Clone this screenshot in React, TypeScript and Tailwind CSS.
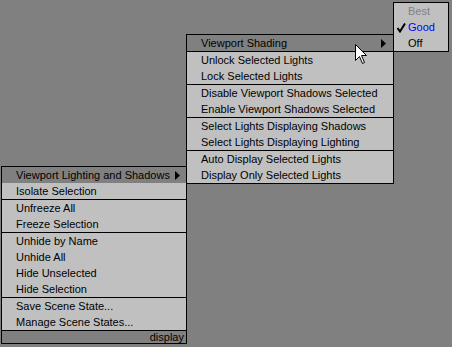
import React from 'react';

// --- Menu data ---
type Item = { label: string; sub?: boolean; active?: boolean };

const upperGroups: Item[][] = [
  [{ label: 'Viewport Shading', sub: true, active: true }],
  [{ label: 'Unlock Selected Lights' }, { label: 'Lock Selected Lights' }],
  [{ label: 'Disable Viewport Shadows Selected' }, { label: 'Enable Viewport Shadows Selected' }],
  [{ label: 'Select Lights Displaying Shadows' }, { label: 'Select Lights Displaying Lighting' }],
  [{ label: 'Auto Display Selected Lights' }, { label: 'Display Only Selected Lights' }],
];

const leftGroups: Item[][] = [
  [{ label: 'Viewport Lighting and Shadows', sub: true, active: true }, { label: 'Isolate Selection' }],
  [{ label: 'Unfreeze All' }, { label: 'Freeze Selection' }],
  [{ label: 'Unhide by Name' }, { label: 'Unhide All' }, { label: 'Hide Unselected' }, { label: 'Hide Selection' }],
  [{ label: 'Save Scene State...' }, { label: 'Manage Scene States...' }],
];

const SubArrow: React.FC<{ className?: string }> = ({ className }) => (
  <svg width="5" height="9" viewBox="0 0 5 9" className={className}>
    <path d="M0 0 L5 4.5 L0 9 Z" fill="#000" />
  </svg>
);

const MenuRow: React.FC<{ item: Item; arrowRight: string }> = ({ item, arrowRight }) => (
  <div
    className={`relative h-4 pl-[14px] leading-4 whitespace-nowrap ${item.active ? 'bg-[#808080]' : ''}`}
  >
    {item.label}
    {item.sub && <SubArrow className={`absolute top-[4px] ${arrowRight}`} />}
  </div>
);

const Menu: React.FC<{ groups: Item[][]; arrowRight: string; footer?: boolean }> = ({ groups, arrowRight, footer }) => (
  <div className="flex flex-col border border-black bg-[#c0c0c0] text-black">
    {groups.map((g, gi) => (
      <div key={gi} className={gi > 0 ? 'border-t border-black' : ''}>
        {g.map((it) => (
          <MenuRow key={it.label} item={it} arrowRight={arrowRight} />
        ))}
      </div>
    ))}
    {footer && (
      <div className="h-[13px] border-t border-black bg-[#808080] pr-[2px] text-right leading-[12px]">display</div>
    )}
  </div>
);

const Cursor: React.FC = () => (
  <svg width="13" height="22" viewBox="0 0 13 22">
    <path
      d="M0.5 0.5 L0.5 16.5 L4.5 12.5 L7.5 19.5 L9.5 18.5 L6.5 11.5 L11.5 11.5 Z"
      fill="#fff"
      stroke="#000"
      strokeWidth="1"
    />
  </svg>
);

export default function App() {
  return (
    <div
      className="relative h-[347px] w-[452px] overflow-hidden bg-[#808080] text-[11px] antialiased"
      style={{ fontFamily: '"Liberation Sans", Arial, sans-serif' }}
    >
      {/* left context menu */}
      <div className="absolute left-[1px] top-[166px] w-[186px]">
        <Menu groups={leftGroups} arrowRight="right-[6px]" footer />
      </div>

      {/* upper context menu */}
      <div className="absolute left-[186px] top-[34px] w-[208px]">
        <Menu groups={upperGroups} arrowRight="right-[7px]" />
      </div>

      {/* shading submenu */}
      <div className="absolute left-[393px] top-[2px] w-[56px] border border-black bg-[#c0c0c0]">
        <div className="h-4 pl-[14px] leading-4 text-[#808080]">Best</div>
        <div className="relative h-4 pl-[14px] leading-4 text-[#0000ff]">
          <svg width="9" height="10" viewBox="0 0 9 10" className="absolute left-[3px] top-[4px]">
            <path d="M0.5 5 L3 8.5 L8 0.5" fill="none" stroke="#000" strokeWidth="2" />
          </svg>
          Good
        </div>
        <div className="h-4 pl-[14px] leading-4">Off</div>
      </div>

      {/* mouse pointer */}
      <div className="absolute left-[355px] top-[44px]">
        <Cursor />
      </div>
    </div>
  );
}
